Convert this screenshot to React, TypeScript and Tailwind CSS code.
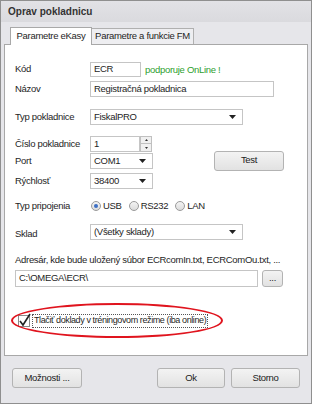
import React from "react";

const font = { fontFamily: '"Liberation Sans", Arial, sans-serif' };

function Arrow() {
  return (
    <svg width="7" height="4" viewBox="0 0 7 4" className="shrink-0">
      <path d="M0 0 L7 0 L3.5 4 Z" fill="#222" />
    </svg>
  );
}

function Select({ value, w }: { value: string; w: string }) {
  return (
    <div className={`${w} h-[16px] border border-[#c5c5c5] bg-white flex items-center justify-between pl-[3px] pr-[6px]`}>
      <span>{value}</span>
      <Arrow />
    </div>
  );
}

function Radio({ label, checked }: { label: string; checked?: boolean }) {
  return (
    <div className="flex items-center gap-[2px]">
      <div className="w-[10px] h-[10px] rounded-full border border-[#9a9a9a] bg-gradient-to-b from-[#f4f4f4] to-[#dcdcdc] flex items-center justify-center">
        {checked && <div className="w-[4px] h-[4px] rounded-full bg-[#3d6fc4]" />}
      </div>
      <span>{label}</span>
    </div>
  );
}

function Btn({ label, w, h = "h-[20px]" }: { label: string; w: string; h?: string }) {
  return (
    <div className={`${w} ${h} border border-[#b3b3b3] rounded-[3px] bg-gradient-to-b from-[#f3f3f3] to-[#e2e2e2] flex items-center justify-center text-[#222]`}>
      {label}
    </div>
  );
}

export default function App() {
  return (
    <div style={font} className="w-[312px] h-[404px] bg-[#e6e6ea] border border-[#8f8f8f] flex flex-col text-[9.5px] tracking-[-0.3px] text-[#1e1e1e] relative overflow-hidden whitespace-nowrap">
      <div className="h-[21px] flex items-center pl-[7px] bg-gradient-to-b from-[#e2e2e6] to-[#dadade] font-bold text-[10px] tracking-normal text-[#333]">
        Oprav pokladnicu
      </div>
      <div className="flex flex-col px-[3px] pt-[5px]">
        <div className="flex items-end pl-[6px] h-[17px]">
          <div className="h-[18px] w-[82px] bg-white border border-b-0 border-[#a8a8a8] flex items-center justify-center relative z-10 -mb-[1px]">
            Parametre eKasy
          </div>
          <div className="h-[16px] w-[102px] bg-[#eeeef1] border border-b-0 border-l-0 border-[#b0b0b0] flex items-center justify-center">
            Parametre a funkcie FM
          </div>
        </div>
        <div className="h-[312px] bg-white border border-[#a8a8a8] flex flex-col pl-[10px] pt-[17px] relative">
          <div className="flex items-center h-[15px]">
            <span className="w-[75px]">Kód</span>
            <div className="w-[51px] h-[15px] border border-[#c5c5c5] flex items-center pl-[3px]">ECR</div>
            <span className="ml-[4px] text-[#2ea02e] mt-[2px]">podporuje OnLine !</span>
          </div>
          <div className="flex items-center h-[16px] mt-[4px]">
            <span className="w-[75px]">Názov</span>
            <div className="w-[184px] h-[16px] border border-[#c5c5c5] flex items-center pl-[3px]">Registračná pokladnica</div>
          </div>
          <div className="flex items-center h-[16px] mt-[12px]">
            <span className="w-[75px]">Typ pokladnice</span>
            <Select value="FiskalPRO" w="w-[153px]" />
          </div>
          <div className="flex items-center h-[16px] mt-[11px]">
            <span className="w-[75px]">Číslo pokladnice</span>
            <div className="w-[50px] h-[16px] border border-[#c5c5c5] flex items-center pl-[3px]">1</div>
            <div className="flex flex-col h-[16px] w-[12px]">
              <div className="h-[8px] border border-[#c0c0c0] bg-[#f0f0f0] flex items-center justify-center">
                <svg width="3" height="2" viewBox="0 0 3 2"><path d="M0 2 L3 2 L1.5 0Z" fill="#333" /></svg>
              </div>
              <div className="h-[8px] border border-t-0 border-[#c0c0c0] bg-[#f0f0f0] flex items-center justify-center">
                <svg width="3" height="2" viewBox="0 0 3 2"><path d="M0 0 L3 0 L1.5 2Z" fill="#333" /></svg>
              </div>
            </div>
          </div>
          <div className="flex items-center h-[16px] mt-[1px]">
            <span className="w-[75px]">Port</span>
            <Select value="COM1" w="w-[63px]" />
            <div className="ml-[61px] -mt-[1px]">
              <Btn label="Test" w="w-[70px]" />
            </div>
          </div>
          <div className="flex items-center h-[16px] mt-[4px]">
            <span className="w-[75px]">Rýchlosť</span>
            <Select value="38400" w="w-[63px]" />
          </div>
          <div className="flex items-center h-[14px] mt-[10px]">
            <span className="w-[76px]">Typ pripojenia</span>
            <div className="flex items-center gap-[7px]">
              <Radio label="USB" checked />
              <Radio label="RS232" />
              <Radio label="LAN" />
            </div>
          </div>
          <div className="flex items-center h-[16px] mt-[11px]">
            <span className="w-[75px] mt-[4px]">Sklad</span>
            <Select value="(Všetky sklady)" w="w-[153px]" />
          </div>
          <div className="mt-[14px] h-[12px] flex items-center">
            Adresár, kde bude uložený súbor ECRcomIn.txt, ECRComOu.txt, ...
          </div>
          <div className="flex items-center mt-[4px] h-[17px]">
            <div className="w-[243px] h-[17px] border border-[#c5c5c5] flex items-center pl-[3px]">C:\OMEGA\ECR\</div>
            <div className="ml-[4px]">
              <Btn label="..." w="w-[21px]" h="h-[17px]" />
            </div>
          </div>
          <div className="flex items-center mt-[26px] h-[15px] pl-[3px] relative">
            <div className="w-[12px] h-[12px] border border-[#8a8a8a] bg-white relative">
              <svg width="14" height="14" viewBox="0 0 14 14" className="absolute -left-[1px] -top-[3px]">
                <path d="M2 8 L5 12 L12 1" stroke="#222" strokeWidth="1.6" fill="none" />
              </svg>
            </div>
            <div className="ml-[2px] border border-dotted border-[#555] px-[1px] h-[14px] flex items-center text-[9px] tracking-[-0.4px]">
              Tlačiť doklady v tréningovom režime (iba online)
            </div>
            <div className="absolute -left-[4px] -top-[10px] w-[212px] h-[35px] border-2 border-[#e0141e] rounded-[50%]" />
          </div>
        </div>
        <div className="flex items-center mt-[12px] px-[8px]">
          <Btn label="Možnosti ..." w="w-[70px]" />
          <div className="ml-auto flex gap-[6px]">
            <Btn label="Ok" w="w-[68px]" />
            <Btn label="Storno" w="w-[69px]" />
          </div>
        </div>
      </div>
    </div>
  );
}
